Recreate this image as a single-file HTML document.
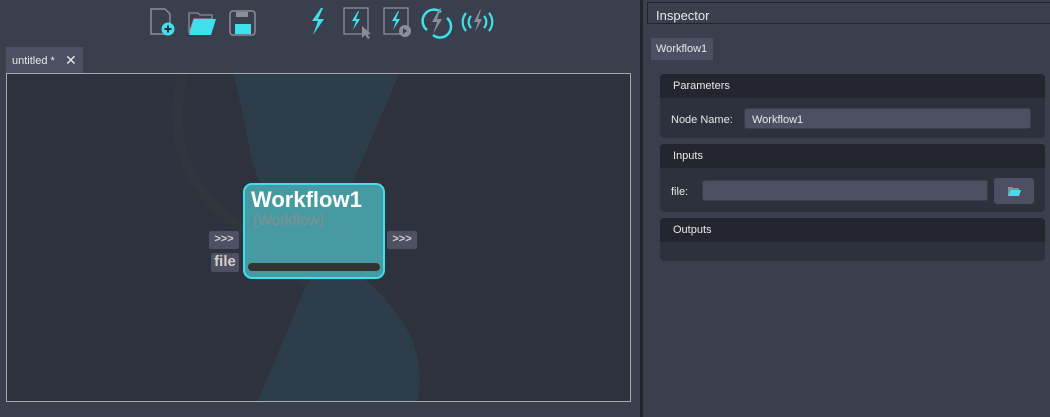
<!DOCTYPE html>
<html><head><style>
*{margin:0;padding:0;box-sizing:border-box}
body{width:1050px;height:417px;background:#3a3f4d;font-family:"Liberation Sans","DejaVu Sans",sans-serif;position:relative;overflow:hidden;color:#e8e8e8}
.abs{position:absolute}
.tab{left:6px;top:47px;width:77px;height:26px;background:#4b5063;font-size:11px;color:#e8e8e8;padding:8px 0 0 6px}
.canvas{left:6px;top:73px;width:625px;height:329px;background:#2e323d;border:1px solid #a5a8ad;overflow:hidden}
.port{background:#4e5163;color:#d8d0c8;font-weight:bold;font-size:11px;border-radius:2px;text-align:center}
.sec{left:660px;width:385px;background:#2d313c;border-radius:4px;overflow:hidden}
.sech{height:24px;background:#23262f;font-size:11px;color:#e8e8e8;padding:6px 0 0 13px}
.lbl{font-size:11px;color:#e8e8e8}
.inp{background:#4b5063;border-radius:3px;border:1px solid #3a3e4b;font-size:11px;color:#e8e8e8;padding:5px 0 0 7px}
</style></head><body>
<!-- toolbar icons -->
<svg class="abs" style="left:140px;top:0" width="360" height="45" viewBox="0 0 360 45">
 <g fill="none" stroke="#8a8e98" stroke-width="1.5">
  <path d="M11 9h14l5 5v20H11z"/>
 </g>
 <circle cx="28" cy="29" r="6.5" fill="#3fe0ec"/>
 <path d="M28 25.5v7M24.5 29h7" stroke="#2e323d" stroke-width="2"/>
 <path d="M49 13h9l2 2h12v4H54l-5 14z" fill="none" stroke="#8a8e98" stroke-width="1.3"/>
 <path d="M54 19h22l-5 16H49z" fill="#3fe0ec"/>
 <rect x="90" y="11" width="25" height="24" rx="3" fill="none" stroke="#8a8e98" stroke-width="1.5"/>
 <rect x="96" y="12" width="12" height="5" fill="#8a8e98"/>
 <rect x="95" y="24" width="16" height="10" fill="#3fe0ec"/>
 <path d="M181 8l-9 13h6l-5 14 11-16h-6l5-11z" fill="#3fe0ec"/>
 <rect x="204" y="8" width="24" height="26" fill="none" stroke="#8a8e98" stroke-width="1.3"/>
 <path d="M218 11l-6 10h4l-3 9 7-11h-4l3-8z" fill="#3fe0ec"/>
 <path d="M222 26l0 12 3-3 3 4 2-1-3-4h4z" fill="#8a8e98"/>
 <rect x="244" y="8" width="24" height="26" fill="none" stroke="#8a8e98" stroke-width="1.3"/>
 <path d="M258 11l-6 10h4l-3 9 7-11h-4l3-8z" fill="#3fe0ec"/>
 <circle cx="265" cy="31" r="6" fill="#8a8e98"/><path d="M263 28v6l4-3z" fill="#3a3f4d"/>
 <path d="M287 30a11 11 0 0 1 14-18M307 18a11 11 0 0 1-14 17" fill="none" stroke="#3fe0ec" stroke-width="2.5"/>
 <path d="M300 8l-8 14h5l-4 12 9-15h-5l4-11z" fill="#8a8e98"/>
 <path d="M326 13a14 14 0 0 0 0 18M331 16a9 9 0 0 0 0 12M349 13a14 14 0 0 1 0 18M344 16a9 9 0 0 1 0 12" fill="none" stroke="#3fe0ec" stroke-width="2.2"/>
 <path d="M340 10l-6 12h4l-3 10 7-13h-4l3-9z" fill="#8a8e98"/>
</svg>
<div class="abs tab">untitled * <span style="position:absolute;left:59px;top:5px;font-size:14px;font-weight:bold">✕</span></div>
<div class="abs canvas">
 <svg class="abs" style="left:0;top:0" width="625" height="329">
  <path d="M226 0H392L349 100Q320 170 300 210L250 329H410Q420 280 390 240Q360 200 320 180Q250 140 240 60Q232 20 226 0z" fill="#2e3d4a"/>
  <path d="M176 0Q160 60 190 110Q220 150 250 160L300 210" fill="none" stroke="#32363f" stroke-width="10" opacity=".7"/>
 </svg>
 <div class="abs" style="left:236px;top:109px;width:142px;height:96px;background:#459ba1;border:2px solid #3fe0ec;border-radius:9px">
  <div style="position:absolute;left:6px;top:2px;font-size:22px;font-weight:bold;color:#fff">Workflow1</div>
  <div style="position:absolute;left:8px;top:27px;font-size:15px;color:#8a8c94">(Workflow)</div>
  <div style="position:absolute;left:3px;top:78px;width:132px;height:8px;background:#333;border-radius:4px"></div>
 </div>
 <div class="abs port" style="left:202px;top:157px;width:30px;height:18px;padding-top:2px">&gt;&gt;&gt;</div>
 <div class="abs port" style="left:204px;top:179px;width:28px;height:19px;font-size:15px">file</div>
 <div class="abs port" style="left:380px;top:157px;width:30px;height:18px;padding-top:2px">&gt;&gt;&gt;</div>
</div>
<div class="abs" style="left:640px;top:0;width:3px;height:417px;background:#23252d"></div>
<div class="abs" style="left:647px;top:2px;width:410px;height:22px;border:1px solid #23252d;font-size:13px;padding:5px 0 0 8px">Inspector</div>
<div class="abs" style="left:651px;top:38px;width:62px;height:22px;background:#4b5063;font-size:11px;padding:5px 0 0 5px">Workflow1</div>
<div class="abs sec" style="top:74px;height:64px">
 <div class="sech">Parameters</div>
 <div class="abs lbl" style="left:11px;top:40px">Node Name:</div>
 <div class="abs inp" style="left:84px;top:34px;width:287px;height:21px">Workflow1</div>
</div>
<div class="abs sec" style="top:144px;height:68px">
 <div class="sech">Inputs</div>
 <div class="abs lbl" style="left:11px;top:42px">file:</div>
 <div class="abs inp" style="left:42px;top:36px;width:286px;height:21px"></div>
 <div class="abs" style="left:334px;top:34px;width:40px;height:26px;background:#4b5063;border-radius:3px">
  <svg width="40" height="26"><path d="M14 9h4l1 1h6v2h-8l-3 6z" fill="#8a8e98"/><path d="M17 12h10l-2 6H14z" fill="#3fe0ec"/></svg>
 </div>
</div>
<div class="abs sec" style="top:218px;height:43px">
 <div class="sech">Outputs</div>
</div>
</body></html>
